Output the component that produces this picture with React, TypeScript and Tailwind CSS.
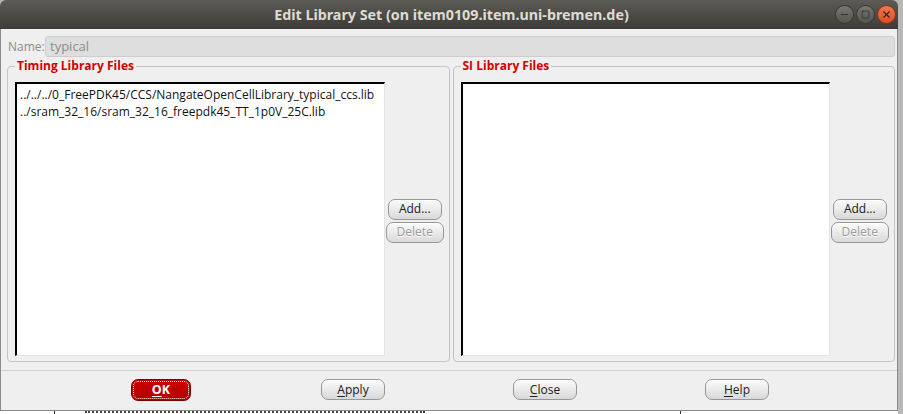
import { Minus, Square, X } from "lucide-react";

const ui = { fontFamily: '"Open Sans", "Noto Sans", sans-serif' };

function Btn({ label, u, disabled, w }: { label: string; u?: number; disabled?: boolean; w?: string }) {
  const chars = label.split("");
  return (
    <button
      className={`${w ?? ""} h-[21px] rounded-[7px] border border-[#979797] bg-gradient-to-b from-[#fbfbfb] to-[#d9d9d9] px-[8px] text-[12px] leading-none shadow-[inset_0_1px_0_#fff] ${
        disabled ? "text-[#9c9c9c] [text-shadow:0_1px_0_#fff]" : "text-[#202020]"
      }`}
    >
      {chars.map((c, i) => (
        <span key={i} className={i === u ? "underline underline-offset-2" : ""}>
          {c}
        </span>
      ))}
    </button>
  );
}

function Group({ title, files, listW }: { title: string; files: string[]; listW: string }) {
  return (
    <div className="relative flex-1 pt-[1px]">
      <div className="flex h-[296px] rounded-[4px] border border-[#c4c4c4] pl-[7px] pt-[15px] pb-[5px]">
        <div
          className={`${listW} h-[274px] border-t-2 border-l-2 border-black border-r border-b border-r-[#e4e4e4] border-b-[#e4e4e4] bg-white px-[3px] pt-[2px] text-[12px] leading-[17px] text-[#111]`}
        >
          {files.map((f) => (
            <div key={f}>{f}</div>
          ))}
        </div>
        <div className="flex flex-1 flex-col items-center justify-center gap-[2px] pt-[3px] pr-[4px]">
          <Btn label="Add..." w="w-[54px]" />
          <Btn label="Delete" disabled w="w-[58px]" />
        </div>
      </div>
      <span className="absolute left-[8px] top-[-6px] bg-[#efefef] px-[2px] text-[12px] font-bold leading-[14px] text-[#d40000]">
        {title}
      </span>
    </div>
  );
}

export default function App() {
  return (
    <div className="h-[414px] w-[903px] overflow-hidden bg-[#b8b8b8]" style={ui}>
      <div className="flex h-[411px] w-[898px] flex-col">
        <div className="flex h-[29px] items-center rounded-t-[6px] bg-gradient-to-b from-[#5d5b56] to-[#3d3c38] pl-[1px]">
          <div className="w-[63px]" />
          <div
            className="flex-1 text-center text-[14.3px] font-bold text-[#dfdbd2] pl-[4px]"
            style={{ fontFamily: '"Noto Sans", "Open Sans", sans-serif' }}
          >
            Edit Library Set (on item0109.item.uni-bremen.de)
          </div>
          <div className="flex w-[63px] items-center gap-[2px]">
            <div className="flex h-[19px] w-[19px] items-center justify-center rounded-full border border-[#3a3935] bg-gradient-to-b from-[#7a7873] to-[#55534f]">
              <Minus size={11} strokeWidth={2} color="#2e2d2a" />
            </div>
            <div className="flex h-[19px] w-[19px] items-center justify-center rounded-full border border-[#3a3935] bg-gradient-to-b from-[#7a7873] to-[#55534f]">
              <Square size={9} strokeWidth={2} color="#2e2d2a" />
            </div>
            <div className="flex h-[19px] w-[19px] items-center justify-center rounded-full border border-[#8a3418] bg-gradient-to-b from-[#f4774a] to-[#df4b1c]">
              <X size={11} strokeWidth={2.5} color="#3b2418" />
            </div>
          </div>
        </div>
        <div className="flex flex-1 flex-col border-x border-b border-[#8a8a8a] bg-[#efefef]">
          <div className="mt-[7px] flex h-[21px] items-center pl-[7px] pr-[2px] text-[13px] text-[#8c8c8c]">
            <span className="w-[37px] shrink-0 whitespace-nowrap text-[12px]">Name:</span>
            <div className="flex h-[21px] flex-1 items-center rounded-[3px] border border-[#cdcdcd] bg-[#dedede] px-[4px]">
              typical
            </div>
          </div>
          <div className="mt-[8px] flex gap-[3px] pl-[6px] pr-[2px]">
            <Group
              title="Timing Library Files"
              listW="w-[370px]"
              files={[
                "../../../0_FreePDK45/CCS/NangateOpenCellLibrary_typical_ccs.lib",
                "../sram_32_16/sram_32_16_freepdk45_TT_1p0V_25C.lib",
              ]}
            />
            <Group title="SI Library Files" listW="w-[369px]" files={[]} />
          </div>
          <div className="mt-[8px] border-t border-[#d2d2d2]" />
          <div className="mt-[8px] grid grid-cols-4 px-[64px]">
            <div className="flex justify-center">
              <button className="flex h-[22px] w-[60px] items-center justify-center rounded-[7px] border border-[#7a0000] bg-gradient-to-b from-[#d00000] to-[#b00000] p-[1px]">
                <span className="flex h-full w-full items-center justify-center rounded-[5px] border border-dotted border-white text-[12.5px] font-bold text-white">
                  <span className="underline underline-offset-2">O</span>K
                </span>
              </button>
            </div>
            <div className="flex justify-center">
              <Btn label="Apply" u={0} w="w-[64px]" />
            </div>
            <div className="flex justify-center">
              <Btn label="Close" u={0} w="w-[64px]" />
            </div>
            <div className="flex justify-center">
              <Btn label="Help" u={0} w="w-[64px]" />
            </div>
          </div>
        </div>
      </div>
      <div className="flex h-[3px] w-[898px] bg-white">
        <div className="w-[55px] border-r border-[#333]" />
        <div className="ml-[30px] w-[340px] border-t-2 border-dotted border-[#444]" />
        <div className="ml-[255px] border-l border-[#333]" />
      </div>
    </div>
  );
}
